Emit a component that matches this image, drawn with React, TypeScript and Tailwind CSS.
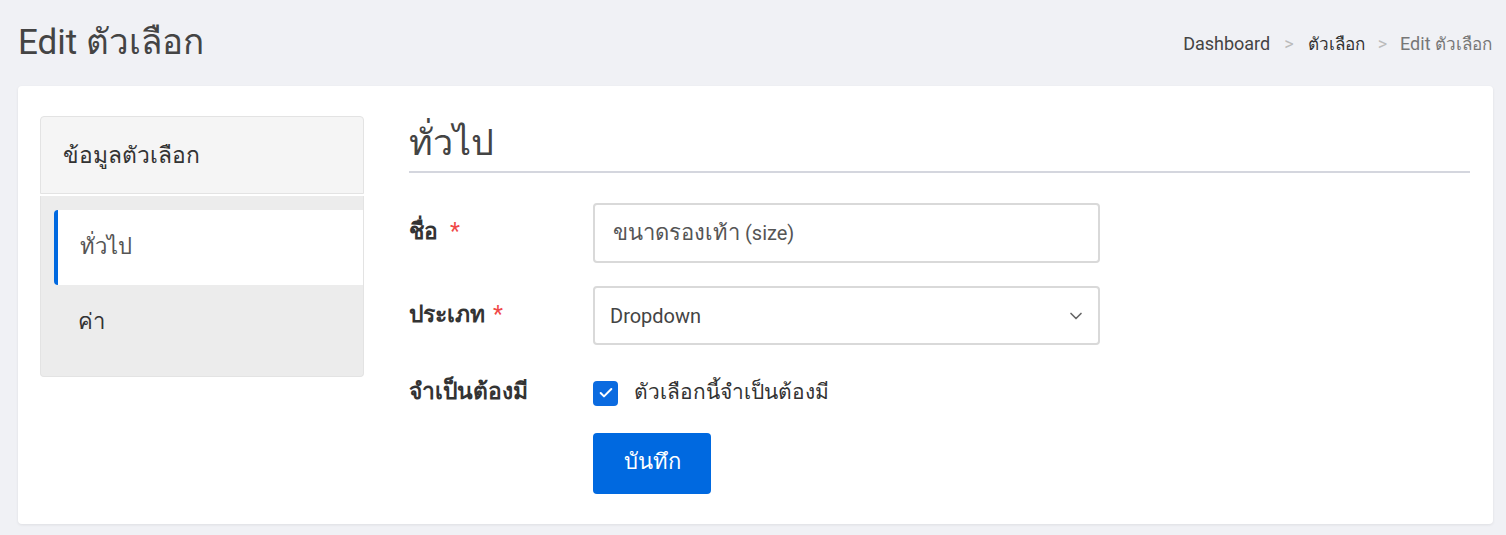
import { Check, ChevronDown } from 'lucide-react';
import type { ReactNode } from 'react';

const font = { fontFamily: '"Roboto", "Noto Sans", "DejaVu Sans", sans-serif' };

function Th({ children, scale = 'md' }: { children: ReactNode; scale?: 'xs' | 'sm' | 'md' | 'lg' }) {
  const size =
    scale === 'xs'
      ? 'text-[0.95em]'
      : scale === 'sm'
        ? 'text-[1.1em]'
        : scale === 'lg'
          ? 'text-[1.2em]'
          : 'text-[1.16em]';
  return <span className={`${size} leading-none`}>{children}</span>;
}

export default function App() {
  return (
    <div className="min-h-screen bg-[#f0f1f5] pl-[18px] pr-[13px] text-[#333]" style={font}>
      {/* Top bar */}
      <div className="flex h-[86px] items-center justify-between pr-[1px] pt-[1px]">
        <h1 className="text-[35px] font-normal text-[#444]">Edit ตัวเลือก</h1>
        <nav className="flex items-center text-[18px]">
          <span className="text-[#444]">Dashboard</span>
          <span className="mx-[14px] text-[#bbb]">&gt;</span>
          <span className="text-[#333]">
            <Th scale="xs">ตัวเลือก</Th>
          </span>
          <span className="mx-[13px] text-[#bbb]">&gt;</span>
          <span className="text-[#777]">
            Edit <Th scale="xs">ตัวเลือก</Th>
          </span>
        </nav>
      </div>

      {/* Card */}
      <div className="flex h-[438px] gap-[45px] rounded bg-white pl-[22px] pr-[23px] pt-[30px] shadow-[0_1px_3px_rgba(0,0,0,0.08)]">
        {/* Sidebar */}
        <aside className="w-[324px] shrink-0">
          <div className="flex h-[78px] items-center rounded-t border border-[#e3e3e3] bg-[#f5f5f5] px-[22px] pt-[3px] text-[19px] text-[#333]">
            <Th scale="lg">ข้อมูลตัวเลือก</Th>
          </div>
          <div className="mt-[2px] rounded-b border border-t-0 border-[#e3e3e3] bg-[#ececec] pb-[16px] pl-[13px] pt-[14px]">
            <div className="flex h-[75px] items-center rounded-l-sm border-l-4 border-[#0069e0] bg-white pl-[22px] text-[19px] text-[#555]">
              <Th>ทั่วไป</Th>
            </div>
            <div className="flex h-[75px] items-center pl-[24px] text-[19px] text-[#333]">
              <Th>ค่า</Th>
            </div>
          </div>
        </aside>

        {/* Form */}
        <main className="flex-1">
          <h2 className="flex h-[55px] items-center text-[31px] font-normal text-[#444]">
            <Th>ทั่วไป</Th>
          </h2>
          <div className="border-b-2 border-[#d4d6de]" />

          <div className="mt-[30px] flex items-start">
            <label className="flex w-[184px] items-center pt-[12px] text-[19px] font-bold text-[#333]">
              <Th scale="lg">ชื่อ</Th>
              <span className="ml-3 text-[23px] font-normal text-[#f04848]">*</span>
            </label>
            <div className="flex h-[60px] w-[507px] items-center rounded border-2 border-[#d9d9d9] px-[18px] text-[20px] text-[#555]">
              <Th scale="sm">ขนาดรองเท้า</Th>&nbsp;(size)
            </div>
          </div>

          <div className="mt-[23px] flex items-start">
            <label className="flex w-[184px] items-center pt-[12px] text-[19px] font-bold text-[#333]">
              <Th scale="lg">ประเภท</Th>
              <span className="ml-2 text-[23px] font-normal text-[#f04848]">*</span>
            </label>
            <div className="flex h-[59px] w-[507px] items-center justify-between rounded border-2 border-[#d9d9d9] pl-[15px] pr-[12px] text-[20px] text-[#444]">
              <span>Dropdown</span>
              <ChevronDown className="h-5 w-5 text-[#666]" strokeWidth={2} />
            </div>
          </div>

          <div className="mt-[34px] flex items-center">
            <label className="w-[184px] text-[19px] font-bold text-[#333]">
              <Th scale="lg">จำเป็นต้องมี</Th>
            </label>
            <div className="flex items-center gap-[16px]">
              <span className="flex h-[25px] w-[25px] items-center justify-center rounded-[4px] bg-[#0b6be0]">
                <Check className="h-4 w-4 text-white" strokeWidth={3} />
              </span>
              <span className="text-[19px] text-[#333]">
                <Th scale="sm">ตัวเลือกนี้จำเป็นต้องมี</Th>
              </span>
            </div>
          </div>

          <div className="mt-[25px] pl-[184px]">
            <button className="h-[61px] w-[118px] rounded bg-[#0069e0] text-[19px] text-white">
              <Th>บันทึก</Th>
            </button>
          </div>
        </main>
      </div>
    </div>
  );
}
